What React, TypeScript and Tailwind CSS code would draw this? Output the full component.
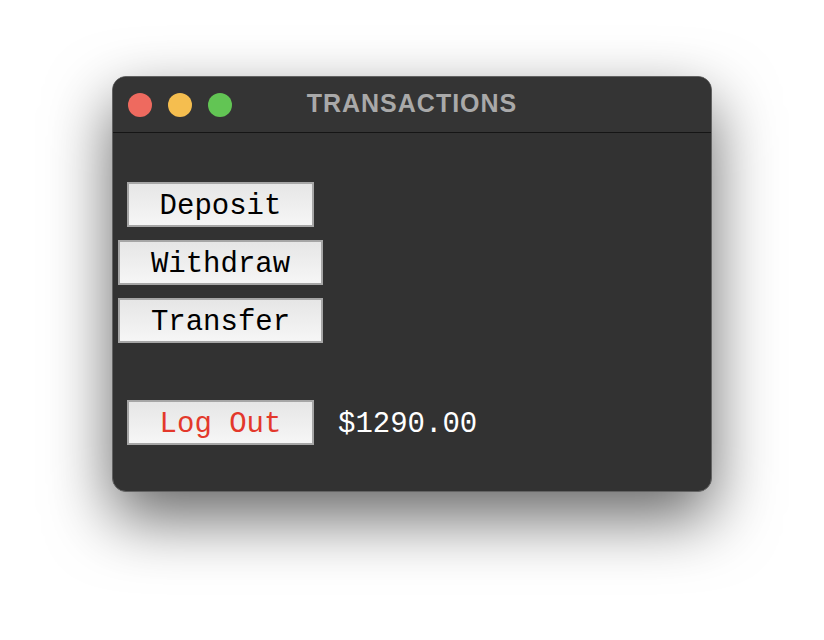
const mono = "font-['Courier_New','Liberation_Mono',monospace] text-[29px] leading-none";

const btn =
  "h-[45px] flex items-center justify-center pt-[3px] border-2 border-[#a6a6a6] bg-gradient-to-b from-[#e6e6e6] to-[#f6f6f6] " +
  mono;

export default function App() {
  return (
    <div className="min-h-screen bg-white flex justify-center pt-[76px]">
      <div className="w-[600px] h-[416px] rounded-[14px] border border-[#636363] bg-[#323232] overflow-hidden flex flex-col shadow-[0_26px_64px_rgba(0,0,0,0.6)]">
        <div className="relative h-[56px] shrink-0 border-b border-[#151515] flex items-center pl-[15px] gap-4 bg-[#343434]">
          <span className="w-6 h-6 rounded-full bg-[#ee6a5f]" />
          <span className="w-6 h-6 rounded-full bg-[#f5be4f]" />
          <span className="w-6 h-6 rounded-full bg-[#62c554]" />
          <span className="absolute inset-0 flex items-center justify-center pb-[2px] font-['Liberation_Sans',Arial,sans-serif] font-bold text-[25px] tracking-[1px] text-[#a9a9a9]">
            TRANSACTIONS
          </span>
        </div>
        <div className="flex-1 pl-[5px] pt-[49px]">
          <div className="flex flex-col w-[205px] items-center gap-[13px]">
            <button className={btn + " w-[187px] text-black"}>Deposit</button>
            <button className={btn + " w-[205px] text-black"}>Withdraw</button>
            <button className={btn + " w-[205px] text-black"}>Transfer</button>
          </div>
          <div className="flex items-center mt-[57px]">
            <div className="w-[205px] flex justify-center">
              <button className={btn + " w-[187px] text-[#e3382b]"}>Log Out</button>
            </div>
            <span className={"ml-[15px] pt-[4px] text-white " + mono}>$1290.00</span>
          </div>
        </div>
      </div>
    </div>
  );
}
